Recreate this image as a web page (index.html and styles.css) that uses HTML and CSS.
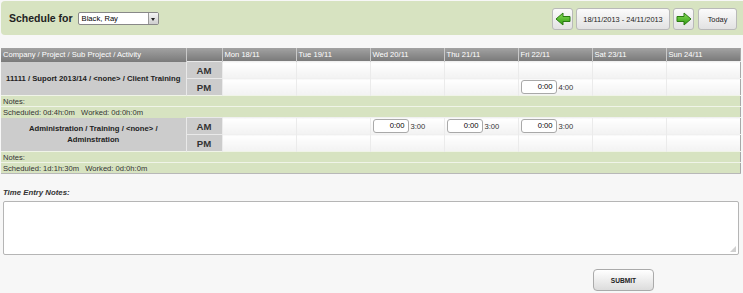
FILE: index.html
```html
<!DOCTYPE html>
<html lang="en">
<head>
    <meta charset="UTF-8">
    <title>Schedule</title>
    <link rel="stylesheet" href="styles.css">
</head>
<body>
    <div class="topbar">
        <div class="who">
            <span class="title">Schedule for</span>
            <span class="select">Black, Ray<span class="drop"><span class="caret"></span></span></span>
        </div>
        <div class="nav">
            <button class="btn arrow">
                <svg width="16" height="14" viewBox="0 0 16 14"><defs><linearGradient id="ga" x1="0" y1="0" x2="0" y2="1"><stop offset="0" stop-color="#8be05a"/><stop offset="1" stop-color="#2e9a10"/></linearGradient></defs><path d="M1 7 L8 1 V4.5 H15 V9.5 H8 V13 Z" fill="url(#ga)" stroke="#2b7a12" stroke-width="1" stroke-linejoin="round"/></svg>
            </button>
            <button class="btn range">18/11/2013 - 24/11/2013</button>
            <button class="btn arrow">
                <svg width="16" height="14" viewBox="0 0 16 14"><defs><linearGradient id="gb" x1="0" y1="0" x2="0" y2="1"><stop offset="0" stop-color="#8be05a"/><stop offset="1" stop-color="#2e9a10"/></linearGradient></defs><path d="M15 7 L8 1 V4.5 H1 V9.5 H8 V13 Z" fill="url(#gb)" stroke="#2b7a12" stroke-width="1" stroke-linejoin="round"/></svg>
            </button>
            <button class="btn today">Today</button>
        </div>
    </div>

    <table class="grid">
        <colgroup>
            <col class="c-label"><col class="c-half">
            <col class="c-day"><col class="c-day"><col class="c-day"><col class="c-day"><col class="c-day"><col class="c-day"><col class="c-day">
        </colgroup>
        <tr class="head">
            <th>Company / Project / Sub Project / Activity</th><th></th>
            <th>Mon 18/11</th><th>Tue 19/11</th><th>Wed 20/11</th><th>Thu 21/11</th><th>Fri 22/11</th><th>Sat 23/11</th><th>Sun 24/11</th>
        </tr>
        <tr class="slot">
            <td class="label" rowspan="2">11111 / Suport 2013/14 / &lt;none&gt; / Client Training</td>
            <td class="half">AM</td>
            <td></td><td></td><td></td><td></td><td></td><td></td><td></td>
        </tr>
        <tr class="slot">
            <td class="half">PM</td>
            <td></td><td></td><td></td><td></td>
            <td><span class="entry"><span class="time">0:00</span> 4:00</span></td>
            <td></td><td></td>
        </tr>
        <tr class="info"><td colspan="9">Notes:</td></tr>
        <tr class="info"><td colspan="9">Scheduled: 0d:4h:0m&nbsp;&nbsp; Worked: 0d:0h:0m</td></tr>
        <tr class="slot">
            <td class="label" rowspan="2">Administration / Training / &lt;none&gt; /<br>Adminstration</td>
            <td class="half">AM</td>
            <td></td><td></td>
            <td><span class="entry"><span class="time">0:00</span> 3:00</span></td>
            <td><span class="entry"><span class="time">0:00</span> 3:00</span></td>
            <td><span class="entry"><span class="time">0:00</span> 3:00</span></td>
            <td></td><td></td>
        </tr>
        <tr class="slot">
            <td class="half">PM</td>
            <td></td><td></td><td></td><td></td><td></td><td></td><td></td>
        </tr>
        <tr class="info"><td colspan="9">Notes:</td></tr>
        <tr class="info"><td colspan="9">Scheduled: 1d:1h:30m&nbsp;&nbsp; Worked: 0d:0h:0m</td></tr>
    </table>

    <div class="notes">
        <div class="notes-title">Time Entry Notes:</div>
        <div class="textarea"><span class="grip"></span></div>
    </div>

    <div class="actions">
        <button class="submit">SUBMIT</button>
    </div>
</body>
</html>
```

FILE: styles.css
```css
body {
    margin: 0;
    background: #f7f7f7;
    font-family: "Liberation Sans", Arial, sans-serif;
    color: #333;
}
.topbar {
    margin: 1px 0 0 1px;
    height: 34px;
    background: #d7e3c1;
    border-radius: 4px 0 0 4px;
    display: flex;
    align-items: center;
    justify-content: space-between;
    padding: 0 6px 0 8px;
}
.who {
    display: flex;
    align-items: center;
    gap: 5px;
}
.title {
    font-weight: bold;
    font-size: 10.5px;
    color: #222;
}
.select {
    position: relative;
    display: inline-block;
    width: 66px;
    height: 11px;
    padding: 0 10px 0 3px;
    line-height: 11px;
    font-size: 7.6px;
    color: #000;
    background: #fff;
    border: 1px solid #888;
    border-radius: 2px;
}
.drop {
    position: absolute;
    right: 0;
    top: 0;
    width: 9px;
    height: 11px;
    background: linear-gradient(#f4f4f4, #cfcfcf);
    border-left: 1px solid #999;
}
.caret {
    position: absolute;
    left: 2px;
    top: 5px;
    width: 0;
    height: 0;
    border-left: 2.5px solid transparent;
    border-right: 2.5px solid transparent;
    border-top: 3px solid #222;
}
.nav {
    display: flex;
    gap: 3px;
    margin-top: 2px;
}
.btn {
    height: 22px;
    padding: 0;
    font-family: "Liberation Sans", Arial, sans-serif;
    font-size: 7.4px;
    color: #222;
    background: linear-gradient(#fbfbfb, #e2e2e2);
    border: 1px solid #b9b9b9;
    border-radius: 3px;
    display: flex;
    align-items: center;
    justify-content: center;
}
.arrow { width: 21px; }
.range { width: 94px; }
.today { width: 39px; margin-left: 1px; }
.grid {
    margin: 13px 0 0 1px;
    width: 739px;
    border-collapse: collapse;
    table-layout: fixed;
    font-size: 7.6px;
    color: #333;
    border-right: 1px solid #a8a8a8;
    border-bottom: 1px solid #b8b8b8;
}
.c-label { width: 185px; }
.c-half { width: 36px; }
.c-day { width: 74px; }
.grid th {
    height: 13px;
    padding: 0 0 0 2px;
    text-align: left;
    font-weight: normal;
    color: #fff;
    background: linear-gradient(#a2a2a2, #7a7a7a);
    border-left: 1px solid #c9c9c9;
    white-space: nowrap;
    overflow: hidden;
}
.grid th:first-child { border-left: none; }
.slot td {
    height: 16px;
    padding: 0 2px;
    color: #333;
    background: linear-gradient(#fff, #f2f2f2);
    border-left: 1px solid #ebebeb;
    border-top: 1px solid #f0f0f0;
}
.slot td.label {
    background: #ccc;
    border: none;
    border-right: 1px solid #e9e9e9;
    text-align: center;
    font-weight: bold;
    font-size: 7.7px;
    color: #222;
    line-height: 11px;
}
.slot td.half {
    background: #ccc;
    border-left: none;
    border-top: 1px solid #e9e9e9;
    text-align: center;
    font-weight: bold;
    font-size: 9.6px;
    color: #333;
}
.info td {
    height: 10px;
    padding: 0 0 0 2px;
    background: #d7e3c1;
    border-top: 1px solid #f0f4e8;
    color: #333;
}
.entry {
    display: inline-flex;
    align-items: center;
    gap: 2px;
    color: #333;
}
.time {
    display: inline-block;
    width: 31px;
    height: 12px;
    padding-right: 3px;
    line-height: 12px;
    text-align: right;
    background: #fff;
    border: 1px solid #a9a9a9;
    border-radius: 3px;
    color: #000;
}
.notes {
    padding: 14px 4px 0 3px;
}
.notes-title {
    font-size: 7.8px;
    font-weight: bold;
    font-style: italic;
    color: #333;
    margin-bottom: 4px;
}
.textarea {
    position: relative;
    height: 52px;
    background: #fff;
    border: 1px solid #b5b5b5;
    border-radius: 2px;
}
.grip {
    position: absolute;
    right: 2px;
    bottom: 2px;
    width: 6px;
    height: 6px;
    background: radial-gradient(circle, #999 0.6px, transparent 0.8px) 0 0 / 2px 2px;
    clip-path: polygon(100% 0, 100% 100%, 0 100%);
}
.actions {
    display: flex;
    justify-content: flex-end;
    padding: 14px 89px 0 0;
}
.submit {
    width: 61px;
    height: 22px;
    font-family: "Liberation Sans", Arial, sans-serif;
    font-size: 6.6px;
    font-weight: bold;
    color: #222;
    background: linear-gradient(#fff, #dcdcdc);
    border: 1px solid #aaa;
    border-radius: 4px;
}
```
